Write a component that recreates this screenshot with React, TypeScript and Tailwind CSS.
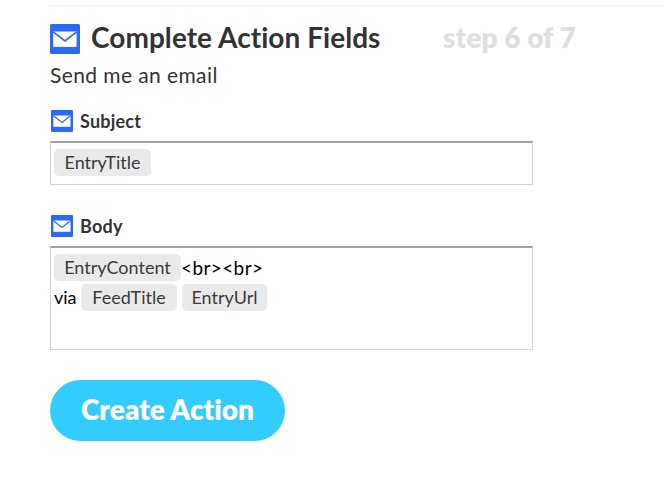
import clsx from 'clsx';

interface MailIconProps {
  className: string;
}

function MailIcon({ className }: MailIconProps) {
  return (
    <svg viewBox="0 0 30 30" className={clsx('shrink-0', className)}>
      <rect width="30" height="30" rx="1.5" fill="#2a69fb" />
      <rect x="3.2" y="7.5" width="23.4" height="15.4" fill="#fff" />
      <path d="M3.2 7.8 L15 17 L26.6 7.8" fill="none" stroke="#2a69fb" strokeWidth="1.6" />
    </svg>
  );
}

interface ChipProps {
  label: string;
  className: string;
}

function Chip({ label, className }: ChipProps) {
  return (
    <span
      className={clsx(
        'flex h-[27px] shrink-0 items-center justify-center whitespace-nowrap rounded-[5px] bg-[#eaeaea] text-[#3b3b3b]',
        className,
      )}
    >
      {label}
    </span>
  );
}

function FieldLabel({ text }: { text: string }) {
  return (
    <div className="ml-px flex h-[22px] items-center gap-[7px]">
      <MailIcon className="size-[22px]" />
      <span className="text-[18px] font-bold leading-[22px] tracking-[0.2px]">{text}</span>
    </div>
  );
}

const FIELD_BOX =
  'w-[483px] border border-t-2 border-[#d2d2d2] border-t-[#a2a2a2] pl-[3px] pt-[6px] text-[18px] leading-[27px] text-black';

export default function App() {
  return (
    <div className="h-[481px] overflow-hidden bg-white pl-[50px] pt-[5px] font-['Lato',sans-serif] text-[#333] [font-variant-ligatures:none]">
      <div className="h-px bg-[#eeeeee]" />
      <div className="mt-[18px] flex h-[30px] items-center">
        <MailIcon className="size-[30px]" />
        <h1 className="mb-[5px] ml-[11px] w-[351px] whitespace-nowrap text-[28px] font-bold leading-[30px] tracking-[0.05px]">
          Complete Action Fields
        </h1>
        <span className="mb-[5px] ml-px whitespace-nowrap text-[28px] font-extrabold leading-[30px] tracking-[0.1px] text-[#dfdfdf]">
          step 6 of 7
        </span>
      </div>
      <p className="mt-[8px] h-[27px] text-[21px] leading-[26px] tracking-[0.4px]">Send me an email</p>

      <div className="mt-[21px]">
        <FieldLabel text="Subject" />
        <div className={clsx(FIELD_BOX, 'mt-[9px] h-[44px]')}>
          <Chip label="EntryTitle" className="w-[97px]" />
        </div>
      </div>

      <div className="mt-[30px]">
        <FieldLabel text="Body" />
        <div className={clsx(FIELD_BOX, 'mt-[9px] h-[104px]')}>
          <div className="flex">
            <Chip label="EntryContent" className="w-[127px]" />
            <span className="text-[19px] tracking-[0.4px]">{'<br><br>'}</span>
          </div>
          <div className="mt-[3px] flex">
            <span className="w-[27px]">via</span>
            <Chip label="FeedTitle" className="w-[96px]" />
            <Chip label="EntryUrl" className="ml-[5px] w-[85px]" />
          </div>
        </div>
      </div>

      <button className="mt-[30px] flex h-[61px] w-[235px] items-center justify-center whitespace-nowrap rounded-full bg-[#33ccff] pb-[4px] text-[28px] font-extrabold text-white">
        Create Action
      </button>
    </div>
  );
}
